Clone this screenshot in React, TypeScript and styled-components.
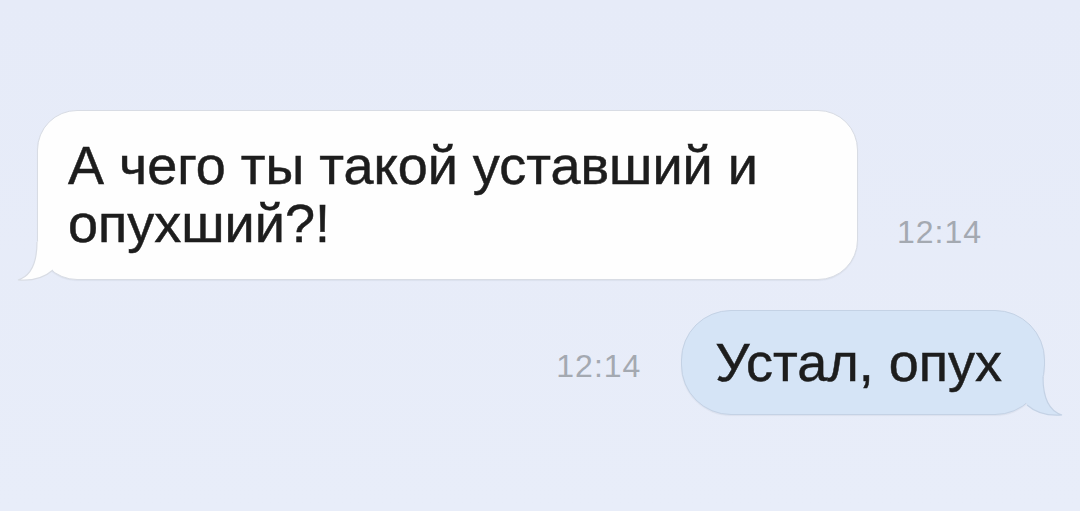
import React from 'react';
import styled, { createGlobalStyle } from 'styled-components';

const GlobalStyle = createGlobalStyle`
  html, body {
    margin: 0;
    padding: 0;
    background: #e7ecf8;
  }
  body {
    font-family: "Liberation Sans", Arial, sans-serif;
  }
`;

const Screen = styled.div`
  width: 1080px;
  height: 511px;
  box-sizing: border-box;
  padding: 110px 35px 0 37px;
  display: flex;
  flex-direction: column;
  gap: 30px;
  background: linear-gradient(180deg, #e6ebf8 0%, #e8edf9 100%);
  overflow: hidden;
`;

const Row = styled.div<{ $out?: boolean }>`
  display: flex;
  justify-content: ${(p) => (p.$out ? 'flex-end' : 'flex-start')};
  align-items: ${(p) => (p.$out ? 'center' : 'flex-end')};
`;

const Bubble = styled.div<{ $out?: boolean }>`
  position: relative;
  box-sizing: border-box;
  width: ${(p) => (p.$out ? 'auto' : '821px')};
  padding: ${(p) => (p.$out ? '22px 42px 23px 33px' : '25px 30px 27px 30px')};
  border-radius: ${(p) => (p.$out ? '50px' : '40px')};
  background: ${(p) => (p.$out ? '#d5e4f6' : '#fefefe')};
  border: 1px solid ${(p) => (p.$out ? '#c4d2e5' : '#d8dce4')};
  box-shadow: 0 1px 1px rgba(40, 50, 70, 0.06);
  color: #1d1d1d;
  font-size: 54px;
  line-height: 58px;
  -webkit-text-stroke: 0.5px #1d1d1d;
  white-space: pre-line;
`;

const Time = styled.span<{ $out?: boolean }>`
  font-size: 32px;
  line-height: 32px;
  letter-spacing: 1px;
  color: #a4a9b1;
  margin: ${(p) => (p.$out ? '6px 40px 0 0' : '0 0 32px 39px')};
`;

const TailSvg = styled.svg<{ $out?: boolean }>`
  position: absolute;
  bottom: -3px;
  width: 50px;
  height: 52px;
  overflow: visible;
  ${(p) => (p.$out ? 'right: -21px; transform: scaleX(-1);' : 'left: -23px;')}
`;

function Tail({ out }: { out?: boolean }) {
  const fill = out ? '#d5e4f6' : '#fefefe';
  const stroke = out ? '#c4d2e5' : '#d8dce4';
  return (
    <TailSvg $out={out} viewBox="0 0 50 52">
      <path d="M22 12 C22 32, 16 46, 3 50 C16 51, 29 48, 38 40 L46 20 L30 8 Z" fill={fill} />
      <path
        d="M22 12 C22 32, 16 46, 3 50 C16 51, 29 48, 38 40"
        fill="none"
        stroke={stroke}
        strokeWidth="1.2"
      />
    </TailSvg>
  );
}

export default function App() {
  return (
    <>
      <GlobalStyle />
      <Screen>
        <Row>
          <Bubble>
            {'А чего ты такой уставший и\nопухший?!'}
            <Tail />
          </Bubble>
          <Time>12:14</Time>
        </Row>
        <Row $out>
          <Time $out>12:14</Time>
          <Bubble $out>
            Устал, опух
            <Tail out />
          </Bubble>
        </Row>
      </Screen>
    </>
  );
}
